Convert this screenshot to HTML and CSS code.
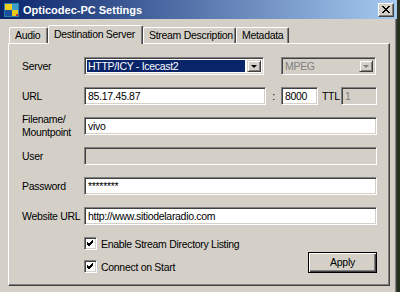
FILE: index.html
```html
<!DOCTYPE html>
<html lang="en">
<head>
    <meta charset="UTF-8">
    <title>Opticodec-PC Settings</title>
    <link rel="stylesheet" href="styles.css">
</head>
<body>
    <div class="window">
        <!-- title bar -->
        <div class="titlebar">
            <svg class="app-icon" width="15" height="14" viewBox="0 0 15 14">
                <rect x="0" y="0" width="15" height="14" fill="#2c7fa8"/>
                <rect x="1" y="1" width="7" height="6" fill="#f0d020"/>
                <rect x="8" y="1" width="6" height="6" fill="#3aa0c8"/>
                <rect x="1" y="7" width="7" height="6" fill="#1a4f9a"/>
                <rect x="8" y="7" width="6" height="6" fill="#e8c818"/>
                <rect x="12" y="11" width="2" height="2" fill="#c83030"/>
            </svg>
            <span class="title">Opticodec-PC Settings</span>
            <span class="close">
                <svg width="8" height="7" viewBox="0 0 8 7">
                    <path d="M0 0 L7 7 M1 0 L8 7 M7 0 L0 7 M8 0 L1 7" stroke="#000" stroke-width="1"/>
                </svg>
            </span>
        </div>

        <div class="content">
            <div class="tabs">
                <span class="tab tab-audio">Audio</span>
                <span class="tab tab-dest active">Destination Server</span>
                <span class="tab tab-stream">Stream Description</span>
                <span class="tab tab-meta">Metadata</span>
            </div>

            <div class="panel">
                <div class="row">
                    <label>Server</label>
                    <div class="select select-server">
                        <span class="value">HTTP/ICY - Icecast2</span>
                        <span class="arrow"></span>
                    </div>
                    <div class="select select-format disabled">
                        <span class="value">MPEG</span>
                        <span class="arrow"></span>
                    </div>
                </div>

                <div class="row">
                    <label>URL</label>
                    <div class="field field-url">85.17.45.87</div>
                    <span class="colon">:</span>
                    <div class="field field-port">8000</div>
                    <span class="ttl">TTL</span>
                    <div class="field field-ttl disabled">1</div>
                </div>

                <div class="row">
                    <label class="two-line">Filename/<br>Mountpoint</label>
                    <div class="field field-wide">vivo</div>
                </div>

                <div class="row">
                    <label>User</label>
                    <div class="field field-wide disabled"></div>
                </div>

                <div class="row">
                    <label>Password</label>
                    <div class="field field-wide">********</div>
                </div>

                <div class="row">
                    <label>Website URL</label>
                    <div class="field field-wide">http://www.sitiodelaradio.com</div>
                </div>

                <div class="bottom">
                    <div class="checks">
                        <div class="check">
                            <span class="box"><svg width="7" height="7" viewBox="0 0 7 7"><path d="M0 2 L2 4 L6 0 M0 3 L2 5 L6 1 M0 4 L2 6 L6 2" stroke="#000" stroke-width="1" fill="none"/></svg></span>
                            <span>Enable Stream Directory Listing</span>
                        </div>
                        <div class="check">
                            <span class="box"><svg width="7" height="7" viewBox="0 0 7 7"><path d="M0 2 L2 4 L6 0 M0 3 L2 5 L6 1 M0 4 L2 6 L6 2" stroke="#000" stroke-width="1" fill="none"/></svg></span>
                            <span>Connect on Start</span>
                        </div>
                    </div>
                    <div class="button">Apply</div>
                </div>
            </div>
        </div>
    </div>
</body>
</html>
```

FILE: styles.css
```css
/* win2000 style dialog */
body {
    margin: 0;
    background-color: #27301f;
    font-family: 'Liberation Sans', Arial, sans-serif;
    font-size: 10.5px;
    letter-spacing: -0.3px;
    color: #000;
}
.window {
    width: 397px;
    height: 292px;
    background-color: #d4d0c8;
    box-shadow: inset -1px 0 #404040, inset -2px 0 #808080;
}
.titlebar {
    height: 19px;
    display: flex;
    align-items: center;
    padding: 0 3px 0 4px;
    background: linear-gradient(to right, #0a246a, #a6caf0);
    color: #fff;
    font-weight: bold;
    font-size: 11px;
    letter-spacing: 0;
}
.app-icon {
    margin-right: 4px;
}
.close {
    margin-left: auto;
    width: 14px;
    height: 12px;
    display: flex;
    align-items: center;
    justify-content: center;
    background-color: #d4d0c8;
    border: 1px solid;
    border-color: #fff #404040 #404040 #fff;
    box-shadow: inset -1px -1px #808080;
}
.content {
    padding: 6px 0 0 8px;
}
.tabs {
    display: flex;
    align-items: flex-end;
    height: 18px;
    padding-left: 1px;
}
.tab {
    box-sizing: border-box;
    height: 16px;
    padding: 1px 0 0 5px;
    white-space: nowrap;
    border-top: 1px solid #fff;
    border-left: 1px solid #fff;
    border-right: 1px solid #404040;
    box-shadow: inset -1px 0 #808080;
    border-radius: 2px 2px 0 0;
}
.tab.active {
    height: 19px;
    padding-top: 2px;
    margin-bottom: -1px;
    background-color: #d4d0c8;
    position: relative;
}
.tab-audio { width: 39px; }
.tab-dest { width: 95px; }
.tab-stream { width: 93px; }
.tab-meta { width: 53px; }
.panel {
    width: 382px;
    height: 243px;
    box-sizing: border-box;
    padding: 13px 12px 0 13px;
    border-top: 1px solid #fff;
    border-left: 1px solid #fff;
    border-right: 1px solid #404040;
    border-bottom: 1px solid #404040;
    box-shadow: inset -1px -1px #808080;
}
.row {
    display: flex;
    align-items: center;
    height: 18px;
    margin-bottom: 12px;
}
label {
    width: 62px;
    flex-shrink: 0;
}
label.two-line {
    line-height: 13px;
}
.field, .select {
    box-sizing: border-box;
    height: 18px;
    background-color: #fff;
    border: 1px solid;
    border-color: #808080 #fff #fff #808080;
    box-shadow: inset 1px 1px #404040, inset -1px -1px #d4d0c8;
    padding: 0 3px;
    line-height: 16px;
    white-space: nowrap;
}
.field.disabled, .select.disabled {
    background-color: #d4d0c8;
    color: #808080;
}
.field-url { width: 182px; }
.field-port { width: 37px; }
.field-ttl { width: 36px; }
.field-wide { width: 293px; }
.colon {
    width: 15px;
    text-align: center;
}
.ttl {
    width: 19px;
    margin-left: 4px;
}
.select {
    display: flex;
    padding: 2px;
}
.select-server { width: 180px; }
.select-format {
    width: 95px;
    margin-left: 17px;
}
.select .value {
    flex: 1;
    line-height: 12px;
    padding-left: 1px;
}
.select-server .value {
    background-color: #0a246a;
    color: #fff;
    margin-right: 2px;
}
.arrow {
    width: 14px;
    box-sizing: border-box;
    background-color: #d4d0c8;
    border: 1px solid;
    border-color: #d4d0c8 #404040 #404040 #d4d0c8;
    box-shadow: inset 1px 1px #fff, inset -1px -1px #808080;
    position: relative;
}
.arrow::after {
    content: '';
    position: absolute;
    left: 3px;
    top: 4px;
    border-left: 3px solid transparent;
    border-right: 3px solid transparent;
    border-top: 3px solid #000;
}
.disabled .arrow::after {
    border-top-color: #808080;
}
.bottom {
    display: flex;
    padding-left: 62px;
}
.checks {
    display: flex;
    flex-direction: column;
    gap: 10px;
}
.check {
    display: flex;
    align-items: center;
    height: 13px;
}
.box {
    box-sizing: border-box;
    width: 13px;
    height: 13px;
    margin-right: 4px;
    display: flex;
    align-items: center;
    justify-content: center;
    background-color: #fff;
    border: 1px solid;
    border-color: #808080 #fff #fff #808080;
    box-shadow: inset 1px 1px #404040, inset -1px -1px #d4d0c8;
}
.button {
    margin-left: auto;
    align-self: flex-end;
    box-sizing: border-box;
    width: 69px;
    height: 21px;
    line-height: 19px;
    text-align: center;
    border: 1px solid #000;
    box-shadow: inset 1px 1px #fff, inset -1px -1px #404040, inset -2px -2px #808080;
}
```
